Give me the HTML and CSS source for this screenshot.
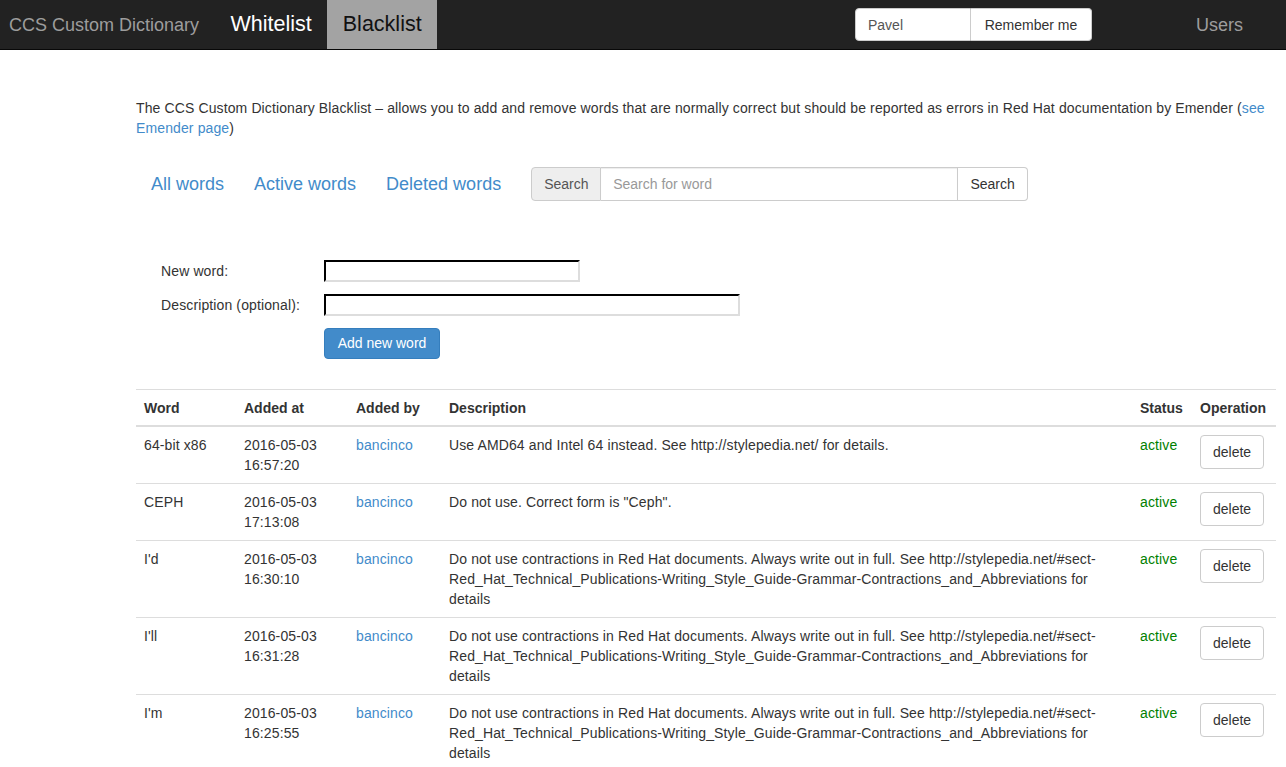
FILE: index.html
```html
<!DOCTYPE html>
<html>
<head>
<meta charset="utf-8">
<title>CCS Custom Dictionary - Blacklist</title>
<link rel="stylesheet" href="styles.css">
</head>
<body>
<nav class="navbar">
  <a class="brand" href="#">CCS Custom Dictionary</a>
  <ul class="nav-main">
    <li><a href="#">Whitelist</a></li>
    <li class="active"><a href="#">Blacklist</a></li>
  </ul>
  <form class="nav-form">
    <input class="nav-input" type="text" value="Pavel">
    <button class="nav-btn" type="button">Remember me</button>
  </form>
  <a class="nav-users" href="#">Users</a>
</nav>

<main class="content">
  <p class="intro">The CCS Custom Dictionary Blacklist – allows you to add and remove words that are normally correct but should be reported as errors in Red Hat documentation by Emender (<a href="#">see Emender page</a>)</p>

  <div class="toolbar">
    <ul class="pills">
      <li><a href="#">All words</a></li>
      <li><a href="#">Active words</a></li>
      <li><a href="#">Deleted words</a></li>
    </ul>
    <div class="input-group">
      <span class="addon">Search</span>
      <input class="search-input" type="text" placeholder="Search for word">
      <button class="btn" type="button">Search</button>
    </div>
  </div>

  <form class="add-form">
    <label class="form-label">New word:</label>
    <div><input class="plain-input short" type="text"></div>
    <label class="form-label">Description (optional):</label>
    <div><input class="plain-input long" type="text"></div>
    <span></span>
    <div><button class="btn-primary" type="button">Add new word</button></div>
  </form>

  <table class="words">
    <colgroup>
      <col class="c-word"><col class="c-at"><col class="c-by"><col class="c-desc"><col class="c-status"><col class="c-op">
    </colgroup>
    <thead>
      <tr><th>Word</th><th>Added at</th><th>Added by</th><th>Description</th><th>Status</th><th>Operation</th></tr>
    </thead>
    <tbody>
      <tr>
        <td>64-bit x86</td><td>2016-05-03 16:57:20</td><td><a href="#">bancinco</a></td>
        <td>Use AMD64 and Intel 64 instead. See http://stylepedia.net/ for details.</td>
        <td class="active">active</td><td><button class="btn" type="button">delete</button></td>
      </tr>
      <tr>
        <td>CEPH</td><td>2016-05-03 17:13:08</td><td><a href="#">bancinco</a></td>
        <td>Do not use. Correct form is "Ceph".</td>
        <td class="active">active</td><td><button class="btn" type="button">delete</button></td>
      </tr>
      <tr>
        <td>I'd</td><td>2016-05-03 16:30:10</td><td><a href="#">bancinco</a></td>
        <td>Do not use contractions in Red Hat documents. Always write out in full. See http://stylepedia.net/#sect-Red_Hat_Technical_Publications-Writing_Style_Guide-Grammar-Contractions_and_Abbreviations for details</td>
        <td class="active">active</td><td><button class="btn" type="button">delete</button></td>
      </tr>
      <tr>
        <td>I'll</td><td>2016-05-03 16:31:28</td><td><a href="#">bancinco</a></td>
        <td>Do not use contractions in Red Hat documents. Always write out in full. See http://stylepedia.net/#sect-Red_Hat_Technical_Publications-Writing_Style_Guide-Grammar-Contractions_and_Abbreviations for details</td>
        <td class="active">active</td><td><button class="btn" type="button">delete</button></td>
      </tr>
      <tr>
        <td>I'm</td><td>2016-05-03 16:25:55</td><td><a href="#">bancinco</a></td>
        <td>Do not use contractions in Red Hat documents. Always write out in full. See http://stylepedia.net/#sect-Red_Hat_Technical_Publications-Writing_Style_Guide-Grammar-Contractions_and_Abbreviations for details</td>
        <td class="active">active</td><td><button class="btn" type="button">delete</button></td>
      </tr>
    </tbody>
  </table>
</main>
</body>
</html>
```

FILE: styles.css
```css
* { box-sizing: border-box; }

html, body {
  margin: 0;
  padding: 0;
}

body {
  font-family: "Liberation Sans", Arial, Helvetica, sans-serif;
  font-size: 14px;
  line-height: 20px;
  color: #333;
  background: #fff;
}

a {
  color: #428bca;
  text-decoration: none;
}

/* Navbar */
.navbar {
  display: flex;
  align-items: center;
  height: 50px;
  background: #222;
  border-bottom: 1px solid #080808;
  padding: 0 28px 0 0;
}

.brand {
  font-size: 18px;
  line-height: 20px;
  color: #9d9d9d;
  padding: 15px 16px 15px 9px;
}

.nav-main {
  display: flex;
  list-style: none;
  margin: 0;
  padding: 0;
  height: 49px;
}

.nav-main a {
  display: block;
  font-size: 21.5px;
  line-height: 49px;
  padding: 0 15.5px;
  color: #fff;
}

.nav-main .active a {
  background: #a3a3a3;
  color: #111;
}

.nav-form {
  display: flex;
  margin-left: auto;
  margin-right: 89px;
}

.nav-input {
  width: 116px;
  height: 33px;
  border: 1px solid #ccc;
  border-radius: 4px 0 0 4px;
  padding: 6px 12px;
  font-family: inherit;
  font-size: 14px;
  color: #555;
  background: #fff;
}

.nav-btn {
  width: 121px;
  height: 33px;
  border: 1px solid #ccc;
  border-left: 0;
  border-radius: 0 4px 4px 0;
  background: #fff;
  font-family: inherit;
  font-size: 14px;
  color: #333;
  padding: 0 12px;
}

.nav-users {
  font-size: 18px;
  line-height: 20px;
  color: #9d9d9d;
  padding: 15px;
}

/* Content */
.content {
  padding: 0 10px 0 136px;
  letter-spacing: 0.12px;
}

.intro {
  margin: 48px 0 0;
}

.toolbar {
  display: flex;
  align-items: center;
  margin-top: 26px;
}

.pills {
  display: flex;
  list-style: none;
  margin: 0;
  padding: 0;
  letter-spacing: 0;
}

.pills a {
  display: block;
  font-size: 18px;
  line-height: 20px;
  padding: 10px 15px;
  border-radius: 4px;
}

.input-group {
  display: flex;
  margin-left: 15px;
  height: 34px;
  letter-spacing: 0;
}

.addon {
  display: block;
  width: 70px;
  padding: 6px 12px;
  background: #eee;
  border: 1px solid #ccc;
  border-radius: 4px 0 0 4px;
  color: #555;
  text-align: center;
}

.search-input {
  width: 357px;
  height: 34px;
  border: 1px solid #ccc;
  border-left: 0;
  padding: 6px 12px;
  font-family: inherit;
  font-size: 14px;
  color: #555;
  box-shadow: inset 0 1px 1px rgba(0, 0, 0, 0.075);
}

.search-input::placeholder {
  color: #999;
}

.btn {
  display: inline-block;
  height: 34px;
  padding: 6px 12px;
  font-family: inherit;
  font-size: 14px;
  line-height: 20px;
  color: #333;
  background: #fff;
  border: 1px solid #ccc;
  border-radius: 4px;
}

.input-group .btn {
  width: 70px;
  border-left: 0;
  border-radius: 0 4px 4px 0;
}

/* Add form */
.add-form {
  display: grid;
  grid-template-columns: 163px auto;
  row-gap: 12px;
  align-items: center;
  margin: 56px 0 0 25px;
}

.form-label {
  line-height: 20px;
}

.plain-input {
  display: block;
  height: 22px;
  border: 2px inset #eee;
  border-top-color: #111;
  border-left-color: #111;
  border-right-color: #ddd;
  border-bottom-color: #ddd;
  font-family: inherit;
  font-size: 13px;
  padding: 1px 2px;
  background: #fff;
}

.plain-input.short { width: 256px; }
.plain-input.long { width: 416px; }

.btn-primary {
  height: 31px;
  width: 116px;
  padding: 5px 0;
  font-family: inherit;
  font-size: 14px;
  line-height: 19px;
  color: #fff;
  background: #428bca;
  border: 1px solid #357ebd;
  border-radius: 4px;
}

/* Table */
.words {
  width: 1140px;
  margin-top: 30px;
  border-collapse: collapse;
  table-layout: fixed;
  border-top: 1px solid #ddd;
}

.c-word { width: 100px; }
.c-at { width: 112px; }
.c-by { width: 93px; }
.c-desc { width: 691px; }
.c-status { width: 60px; }
.c-op { width: 84px; }

.words th {
  text-align: left;
  font-weight: bold;
  padding: 8px 8px 7px;
  line-height: 20px;
  border-bottom: 2px solid #ddd;
  white-space: nowrap;
  letter-spacing: 0;
}

.words td {
  padding: 8px;
  line-height: 20px;
  vertical-align: top;
  border-top: 1px solid #ddd;
}

.words .btn {
  letter-spacing: 0;
}

.words td.active {
  color: #008000;
}
```
